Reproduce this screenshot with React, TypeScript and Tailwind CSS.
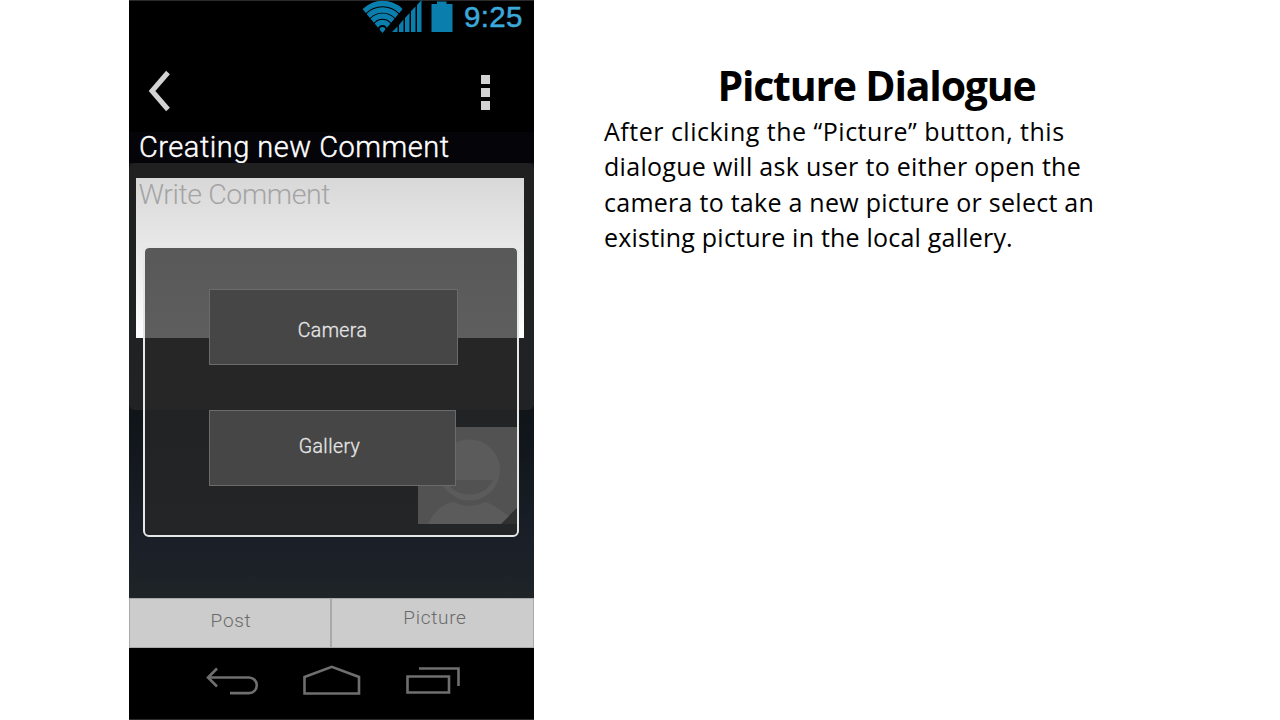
import React from "react";

function StatusBar() {
  return (
    <div className="flex h-[44px] justify-end border-t border-[#2b2b2b] pr-[11px]">
      <svg width="64" height="33" viewBox="0 0 64 33" className="mt-[-1px] shrink-0">
        <defs>
          <clipPath id="fan">
            <path d="M20.500 33 L0.500 9 Q20 -8 41.500 8 Z" />
          </clipPath>
        </defs>
        <g clipPath="url(#fan)" fill="none" stroke="#0a7fae" strokeWidth="5.300">
          <circle cx="20.500" cy="30" r="26.500" />
          <circle cx="20.500" cy="30" r="20" />
          <circle cx="20.500" cy="30" r="13.800" />
          <circle cx="20.500" cy="30" r="7.600" />
          <circle cx="20.500" cy="30" r="1.500" strokeWidth="3" />
        </g>
        <g fill="#0a7fae">
          <path d="M30 32 L35.500 26.500 V32 Z" />
          <path d="M37 32 V25 L41.500 19.500 V32 Z" />
          <path d="M43 32 V18 L47.500 13 V32 Z" />
          <path d="M49 32 V11 L53.500 6.500 V32 Z" />
          <path d="M55 32 V5 L59.500 0 V32 Z" />
        </g>
      </svg>
      <svg width="22" height="33" viewBox="0 0 22 33" className="-mt-px ml-[5px] shrink-0">
        <path d="M0.500 4 H6 V1.500 H15.500 V4 H21.500 V32 H0.500 Z" fill="#0a7fae" />
      </svg>
      <span className="ml-[11px] w-[59px] whitespace-nowrap font-['Liberation_Sans',sans-serif] text-[29.500px] leading-[32px] tracking-[0.300px] text-[#3ba9dc] [-webkit-text-stroke:0.500px_#3ba9dc]">
        9:25
      </span>
    </div>
  );
}

function ActionBar() {
  return (
    <div className="flex h-[88px] items-center justify-between pl-[19px] pr-[44px] pt-[6px]">
      <svg width="24" height="42" viewBox="0 0 24 42" fill="none" stroke="#d2d2d2" strokeWidth="5">
        <path d="M20 2.500 L4 21 L20 39.500" />
      </svg>
      <div className="flex flex-col gap-[4px] pt-[2px]">
        <i className="h-[9px] w-[9px] bg-[#d2d2d2]" />
        <i className="h-[9px] w-[9px] bg-[#d2d2d2]" />
        <i className="h-[9px] w-[9px] bg-[#d2d2d2]" />
      </div>
    </div>
  );
}

function Avatar() {
  return (
    <svg width="99" height="97" viewBox="0 0 99 97" className="shrink-0">
      <path d="M0 0 H99 V81 L83 97 H0 Z" fill="#cecece" />
      <path d="M99 81 L83 97 H99 Z" fill="#4a4a4a" />
      <path d="M10 97 C16 85 25 76 36 75 Q51 83 67 75 C76 77 84 85 91 89 L83 97 Z" fill="#f4f4f4" />
      <circle cx="51.500" cy="43" r="30.500" fill="#f4f4f4" />
      <path d="M28 53 H75 Q68 67.500 51.500 67.500 Q35 67.500 28 53 Z" fill="#cecece" />
    </svg>
  );
}

function Dialog() {
  return (
    <div className="absolute left-[14px] top-[246px] flex h-[291px] w-[376px] flex-col rounded-[6px] border-[2.500px] border-[#e6e8e8] bg-[#282828]/75 bg-clip-padding pl-[64px] pt-[41px]">
      <button className="h-[76px] w-[249px] border border-[#6b6b6b] bg-[#464646] pr-[2px] pt-[8px] font-[Roboto,sans-serif] text-[19.500px] font-light tracking-[0.400px] text-[#e6e6e6] [-webkit-text-stroke:0.300px_#e6e6e6]">
        Camera
      </button>
      <button className="mt-[45px] h-[76px] w-[247px] border border-[#6b6b6b] bg-[#464646] pb-[2px] pr-[6px] font-[Roboto,sans-serif] text-[19.500px] font-light tracking-[0.400px] text-[#e6e6e6] [-webkit-text-stroke:0.300px_#e6e6e6]">
        Gallery
      </button>
    </div>
  );
}

function NavBar() {
  return (
    <div className="flex h-[72px] items-start border-b border-[#2b2b2b] bg-black pl-[77px] pt-[16px]">
      <svg width="255" height="34" viewBox="0 0 255 34" fill="none" stroke="#6f6f6f" strokeWidth="2.600">
        <path d="M11 4.500 L2 13.500 L11 22.500" />
        <path d="M2 13.500 H43 A7.800 7.800 0 0 1 43 29.100 H24" />
        <path d="M98.500 13 L125.800 2.800 L153 13 V29.500 H98.500 Z" />
        <path d="M201.500 12.500 H243 V28.500 H201.500 Z" />
        <path d="M213 4.500 H252.500 V22" />
      </svg>
    </div>
  );
}

function Phone() {
  return (
    <div className="relative flex h-[720px] w-[405px] shrink-0 flex-col overflow-hidden bg-black">
      <StatusBar />
      <ActionBar />
      <h2 className="h-[31px] whitespace-nowrap bg-[#040409] pl-[10px] font-[Roboto,sans-serif] text-[29px] font-light leading-[31px] tracking-[0.500px] text-white [-webkit-text-stroke:0.400px_white]">
        Creating new Comment
      </h2>
      <div className="flex h-[435px] flex-col bg-linear-to-b from-[#10151a] from-60% via-[#1b1f28] via-88% to-[#1e2427]">
        <div className="h-[247px] rounded-[6px] bg-linear-to-b from-[#1f201f] to-[#202224] pl-[6.500px] pr-[10px] pt-[15px]">
          <div className="h-[160px] bg-linear-to-b from-[#d8d8d8] to-white pl-[3px] font-[Roboto,sans-serif] text-[28.500px] font-light leading-[34px] tracking-[-0.400px] text-[#a4a4a4]">
            Write Comment
          </div>
        </div>
        <div className="flex justify-end pr-[17px] pt-[17px]">
          <Avatar />
        </div>
      </div>
      <div className="flex h-[50px] shrink-0 border border-[#a9a9a9] bg-[#cccccc] font-[Roboto,sans-serif] text-[19px] font-light tracking-[0.700px] text-[#6a6a6a]">
        <div className="w-[202px] border-r-2 border-[#a9a9a9] pl-[2px] pt-[8px] text-center">Post</div>
        <div className="flex-1 pl-[5px] pt-[5px] text-center">Picture</div>
      </div>
      <NavBar />
      <Dialog />
    </div>
  );
}

export default function App() {
  return (
    <main className="flex h-[720px] w-[1280px] overflow-hidden bg-white pl-[129px] text-black">
      <Phone />
      <section className="ml-[70px] flex w-[545px] flex-col whitespace-nowrap font-['Open_Sans',sans-serif] text-[25px] leading-[35.300px]">
        <h1 className="mt-[58px] h-[56px] text-center text-[41px] font-bold leading-[54px] tracking-[-1.200px]">
          Picture Dialogue
        </h1>
        <div className="flex flex-col items-start">
          <span className="tracking-[0.500px]">After clicking the “Picture” button, this</span>
          <span className="tracking-[0.300px]">dialogue will ask user to either open the</span>
          <span className="tracking-[0.260px]">camera to take a new picture or select an</span>
          <span className="tracking-[0.210px]">existing picture in the local gallery.</span>
        </div>
      </section>
    </main>
  );
}
